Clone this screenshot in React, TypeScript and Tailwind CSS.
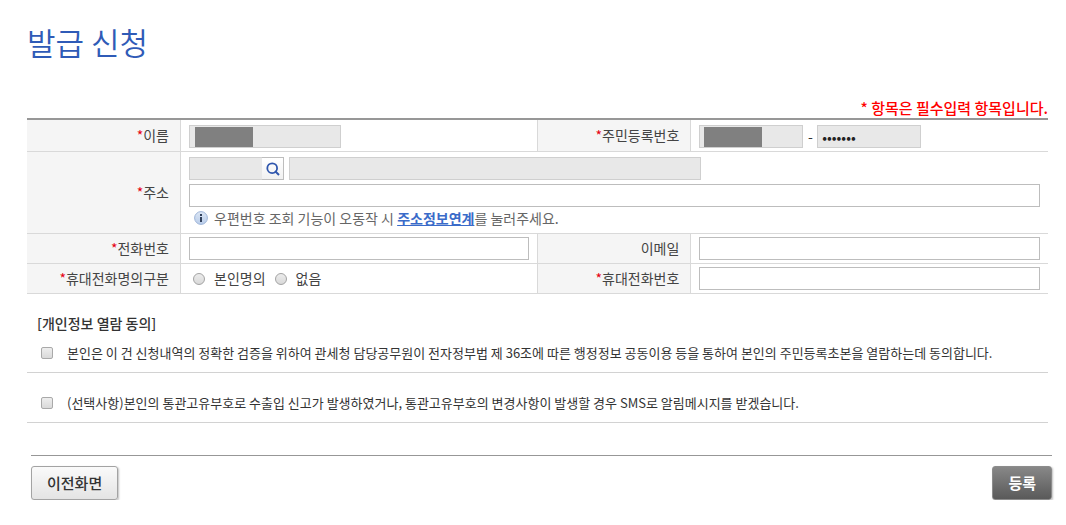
import type { ReactNode } from "react";
import clsx from "clsx";

const field = "h-[23px] border px-1 text-sm text-[#222] outline-none";
const editable = "border-[#bdbdbd] bg-white";
const locked = "border-[#cfcfcf] bg-[#e8e8e8]";

const consents = [
  {
    id: "agree-view",
    text: "본인은 이 건 신청내역의 정확한 검증을 위하여 관세청 담당공무원이 전자정부법 제 36조에 따른 행정정보 공동이용 등을 통하여 본인의 주민등록초본을 열람하는데 동의합니다.",
  },
  {
    id: "agree-sms",
    text: "(선택사항)본인의 통관고유부호로 수출입 신고가 발생하였거나, 통관고유부호의 변경사항이 발생할 경우 SMS로 알림메시지를 받겠습니다.",
  },
];

type LabelCellProps = {
  htmlFor?: string;
  required?: boolean;
  divided?: boolean;
  children: ReactNode;
};

function LabelCell({ htmlFor, required, divided, children }: LabelCellProps) {
  return (
    <th
      scope="row"
      className={clsx(
        "border-r border-b border-[#d9d9d9] bg-[#f5f5f5] pr-[11px] pb-0.5 text-right align-middle text-sm leading-5 font-normal text-[#444]",
        divided && "border-l"
      )}
    >
      <label htmlFor={htmlFor}>
        {required && <span className="text-[#e60012]">*</span>}
        {children}
      </label>
    </th>
  );
}

function Cell({ colSpan, className, children }: { colSpan?: number; className?: string; children: ReactNode }) {
  return (
    <td colSpan={colSpan} className={clsx("border-b border-[#d9d9d9] px-2 align-middle", className)}>
      {children}
    </td>
  );
}

// Read-only field whose value is covered
function MaskedField({ id, className }: { id: string; className: string }) {
  return (
    <div className={clsx("flex h-[23px] items-center border", locked, className)}>
      <span className="h-5 w-[58px] shrink-0 bg-[#808080]" />
      <input id={id} readOnly className="h-full w-0 min-w-0 flex-1 bg-transparent outline-none" />
    </div>
  );
}

function SearchIcon() {
  return (
    <svg width="14" height="14" viewBox="0 0 14 14" fill="none" stroke="#2f56ad" aria-hidden="true">
      <circle cx="6.2" cy="6.2" r="4.9" strokeWidth="1.8" />
      <path d="M9 9l4 4" strokeWidth="2" />
    </svg>
  );
}

function InfoIcon() {
  return (
    <svg width="14" height="14" viewBox="0 0 14 14" aria-hidden="true">
      <defs>
        <linearGradient id="info-fill" x1="0" y1="0" x2="0" y2="1">
          <stop offset="0" stopColor="#dce6f4" />
          <stop offset="1" stopColor="#b9cdea" />
        </linearGradient>
      </defs>
      <circle cx="7" cy="7" r="6.4" fill="url(#info-fill)" stroke="#9fb5d8" />
      <path d="M6 3h2v2H6zM6 6h2v5H6z" fill="#33425c" />
    </svg>
  );
}

function Radio({ id, label }: { id: string; label: string }) {
  return (
    <div className="flex items-center gap-[9px]">
      <input
        id={id}
        type="radio"
        name="phone-owner"
        className="size-3 appearance-none rounded-full border border-[#a3a3a3] bg-linear-to-b from-[#ececec] to-[#d9d9d9] checked:bg-[#555]"
      />
      <label htmlFor={id} className="pb-0.5">{label}</label>
    </div>
  );
}

export default function App() {
  return (
    <main className="bg-white pt-[18px] font-['Noto_Sans_CJK_KR',sans-serif] text-[#333]">
      <div className="mr-[18px] ml-[27px]">
        <h1 className="text-[31px] leading-[48px] font-[350] text-[#2f5bb7]">발급 신청</h1>
        <p className="mt-8 text-right text-[15px] leading-5 font-medium text-[#ff0000]">
          * 항목은 필수입력 항목입니다.
        </p>

        <table className="w-full table-fixed border-separate border-spacing-0 border-t-2 border-[#979797]">
          <colgroup>
            <col className="w-[154px]" />
            <col className="w-[34.9%]" />
            <col className="w-[154px]" />
            <col />
          </colgroup>
          <tbody>
            <tr>
              <LabelCell htmlFor="name" required>이름</LabelCell>
              <Cell className="pt-[5px] pb-[3px]">
                <MaskedField id="name" className="w-[152px] pl-[5px]" />
              </Cell>
              <LabelCell htmlFor="resident-front" required divided>주민등록번호</LabelCell>
              <Cell className="pt-[5px] pb-[3px]">
                <div className="flex items-center">
                  <MaskedField id="resident-front" className="w-[104px] pl-1" />
                  <span className="w-[14px] pb-0.5 text-center text-sm leading-5">-</span>
                  <input
                    type="password"
                    aria-label="주민등록번호 뒷자리"
                    defaultValue="0000000"
                    readOnly
                    className={clsx(field, locked, "w-[104px]")}
                  />
                </div>
              </Cell>
            </tr>
            <tr>
              <LabelCell htmlFor="address-detail" required>주소</LabelCell>
              <Cell colSpan={3} className="pt-[5px] pb-1">
                <div className="flex gap-[5px]">
                  <div className="flex">
                    <input aria-label="우편번호" readOnly className={clsx(field, locked, "w-[73px] border-r-0")} />
                    <button
                      type="button"
                      aria-label="우편번호 조회"
                      className="flex h-[23px] w-[22px] items-center justify-center border border-l-0 border-[#bdbdbd] bg-linear-to-b from-white to-[#f1f1f1]"
                    >
                      <SearchIcon />
                    </button>
                  </div>
                  <input aria-label="기본주소" readOnly className={clsx(field, locked, "w-[412px]")} />
                </div>
                <input id="address-detail" className={clsx(field, editable, "mt-1 block w-full")} />
                <p className="flex h-[22px] items-center gap-1.5 pl-[5px] text-sm leading-5 text-[#666]">
                  <InfoIcon />
                  <span>
                    우편번호 조회 기능이 오동작 시{" "}
                    <a href="#" className="font-bold text-[#3a6bc9] underline">주소정보연계</a>를 눌러주세요.
                  </span>
                </p>
              </Cell>
            </tr>
            <tr>
              <LabelCell htmlFor="phone" required>전화번호</LabelCell>
              <Cell className="py-[3px]">
                <input id="phone" type="tel" className={clsx(field, editable, "block w-full")} />
              </Cell>
              <LabelCell htmlFor="email" divided>이메일</LabelCell>
              <Cell className="py-[3px]">
                <input id="email" type="email" className={clsx(field, editable, "block w-full")} />
              </Cell>
            </tr>
            <tr>
              <LabelCell htmlFor="owner-self" required>휴대전화명의구분</LabelCell>
              <Cell className="py-[3px]">
                <div className="flex items-center gap-[9px] pl-1 text-sm leading-5 text-[#444]">
                  <Radio id="owner-self" label="본인명의" />
                  <Radio id="owner-none" label="없음" />
                </div>
              </Cell>
              <LabelCell htmlFor="mobile" required divided>휴대전화번호</LabelCell>
              <Cell className="py-[3px]">
                <input id="mobile" type="tel" className={clsx(field, editable, "block w-full")} />
              </Cell>
            </tr>
          </tbody>
        </table>

        <section className="mt-[19px]">
          <h2 className="pb-px pl-[10px] text-sm leading-5 font-medium">[개인정보 열람 동의]</h2>
          <ul className="flex flex-col gap-[11px]">
            {consents.map(({ id, text }) => (
              <li key={id} className="flex min-h-[39px] items-center gap-[14px] border-b border-[#d2d2d2] pl-[14px]">
                <input
                  id={id}
                  type="checkbox"
                  className="size-3 shrink-0 appearance-none rounded-xs border border-[#a9a9a9] bg-linear-to-b from-[#eeeeee] to-[#d9d9d9] checked:bg-[#555]"
                />
                <label htmlFor={id} className="text-[13px] leading-5">{text}</label>
              </li>
            ))}
          </ul>
        </section>
      </div>

      <footer className="mt-8 mr-[14px] ml-[31px] flex justify-between border-t border-[#979797] pt-[10px]">
        <button
          type="button"
          className="h-[34px] rounded-[3px] border border-[#a3a3a3] bg-linear-to-b from-[#fafafa] to-[#e4e4e4] px-[15px] text-[15px] leading-5 font-medium text-[#333] shadow-[1px_1px_2px_rgba(0,0,0,0.25)]"
        >
          이전화면
        </button>
        <button
          type="button"
          className="h-[34px] rounded-[3px] border border-[#8c8c8c] bg-linear-to-b from-[#888888] to-[#5a5a5a] px-[15px] text-[15px] leading-5 font-bold text-white shadow-[1px_1px_2px_rgba(0,0,0,0.25)]"
        >
          등록
        </button>
      </footer>
    </main>
  );
}
